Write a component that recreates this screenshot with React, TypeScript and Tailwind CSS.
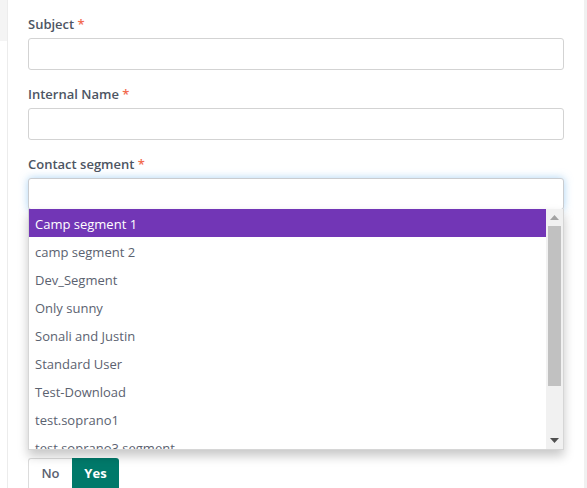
import React from 'react'

const segments = [
  'Camp segment 1',
  'camp segment 2',
  'Dev_Segment',
  'Only sunny',
  'Sonali and Justin',
  'Standard User',
  'Test-Download',
  'test.soprano1',
  'test.soprano3 segment',
  'Trial users',
]

function Label({ text }: { text: string }) {
  return (
    <label className="block text-[13px] leading-[18px] font-semibold text-[#4d5563]">
      {text} <span className="text-[#f26b4f]">*</span>
    </label>
  )
}

function TextInput({ focused = false }: { focused?: boolean }) {
  return (
    <input
      type="text"
      className={`mt-[5px] block h-[32px] w-full rounded-[3px] border bg-white px-2 text-[13px] outline-none ${
        focused
          ? 'border-[#c9ccd0] shadow-[0_0_8px_rgba(102,175,233,0.55)]'
          : 'border-[#d3d3d3]'
      }`}
    />
  )
}

export default function App() {
  return (
    <div
      className="flex h-[488px] w-full overflow-hidden bg-white"
      style={{ fontFamily: '"Open Sans", "Noto Sans", sans-serif' }}
    >
      <div className="w-[7px] shrink-0">
        <div className="h-[41px] bg-[#f4f4f4]" />
      </div>
      <div className="flex-1 border-l border-[#ececec] px-[20px] pt-[15px]">
        <Label text="Subject" />
        <TextInput />
        <div className="mt-[15px]">
          <Label text="Internal Name" />
          <TextInput />
        </div>
        <div className="relative mt-[15px]">
          <Label text="Contact segment" />
          <TextInput focused />

          {/* open dropdown list over the rest of the form */}
          <div className="absolute left-0 right-0 top-[54px] z-10 flex h-[241px] border border-t-0 border-[#d6d6d6] bg-white shadow-[0_6px_10px_rgba(0,0,0,0.22)]">
            <ul className="flex-1 overflow-hidden">
              {segments.map((s, i) => (
                <li
                  key={s}
                  className={`flex h-[28px] items-center px-[6px] pt-[3px] text-[13px] ${
                    i === 0 ? 'bg-[#7236b6] text-white' : 'text-[#5b6270]'
                  }`}
                >
                  {s}
                </li>
              ))}
            </ul>
            <div className="flex w-[17px] shrink-0 flex-col items-center bg-[#f1f1f1]">
              <div className="flex h-[17px] items-center justify-center">
                <svg width="9" height="5" viewBox="0 0 9 5">
                  <path d="M0 5 L4.5 0 L9 5 Z" fill="#a3a3a3" />
                </svg>
              </div>
              <div className="h-[160px] w-[13px] bg-[#c1c1c1]" />
              <div className="flex-1" />
              <div className="flex h-[17px] items-center justify-center">
                <svg width="9" height="5" viewBox="0 0 9 5">
                  <path d="M0 0 L9 0 L4.5 5 Z" fill="#505050" />
                </svg>
              </div>
            </div>
          </div>
        </div>

        <div className="mt-[248px] flex">
          <button className="h-[32px] w-[44px] rounded-l-[3px] border border-r-0 border-[#dcdcdc] bg-white text-[13px] font-semibold text-[#5a6170]">
            No
          </button>
          <button className="h-[32px] w-[47px] rounded-r-[3px] bg-[#00796a] text-[13px] font-bold text-white">
            Yes
          </button>
        </div>
      </div>
      <div className="w-[3px] shrink-0 bg-[#f0f0f0]" />
    </div>
  )
}
